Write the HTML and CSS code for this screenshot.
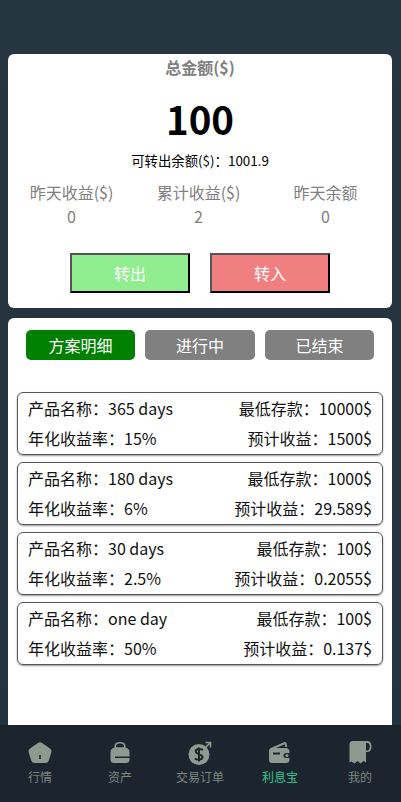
FILE: index.html
```html
<!DOCTYPE html>
<html lang="zh">
<head>
<meta charset="utf-8">
<title>利息宝</title>
<link rel="stylesheet" href="styles.css">
</head>
<body>
<div class="app">
  <main class="content">
    <section class="summary">
      <div class="total-label">总金额($)</div>
      <div class="total-value">100</div>
      <div class="available">可转出余额($)：1001.9</div>
      <div class="stats">
        <div class="stat"><div>昨天收益($)</div><div>0</div></div>
        <div class="stat"><div>累计收益($)</div><div>2</div></div>
        <div class="stat"><div>昨天余额</div><div>0</div></div>
      </div>
      <div class="actions">
        <button class="action out">转出</button>
        <button class="action in">转入</button>
      </div>
    </section>
    <section class="plans">
      <div class="tabs">
        <div class="tab active">方案明细</div>
        <div class="tab">进行中</div>
        <div class="tab">已结束</div>
      </div>
      <div class="plan"><div class="row"><span>产品名称：365 days</span><span>最低存款：10000$</span></div><div class="row"><span>年化收益率：15%</span><span>预计收益：1500$</span></div></div>
      <div class="plan"><div class="row"><span>产品名称：180 days</span><span>最低存款：1000$</span></div><div class="row"><span>年化收益率：6%</span><span>预计收益：29.589$</span></div></div>
      <div class="plan"><div class="row"><span>产品名称：30 days</span><span>最低存款：100$</span></div><div class="row"><span>年化收益率：2.5%</span><span>预计收益：0.2055$</span></div></div>
      <div class="plan"><div class="row"><span>产品名称：one day</span><span>最低存款：100$</span></div><div class="row"><span>年化收益率：50%</span><span>预计收益：0.137$</span></div></div>
    </section>
  </main>
  <nav class="nav">
    <div class="nav-item"><svg viewBox="0 0 24 24"><path fill-rule="evenodd" d="M10 2 Q12 .6 14 2 L22 7.500 Q24 9 23.400 11 L20.800 19.500 Q20 22 17.500 22 H6.500 Q4 22 3.200 19.500 L.6 11 Q0 9 2 7.500 Z M11.200 14 V18 H12.800 V14 Z"/></svg><span>行情</span></div>
    <div class="nav-item"><svg viewBox="0 0 24 24"><path fill-rule="evenodd" d="M6.500 6.500 V5 Q6.500 1 12 1 Q17.500 1 17.500 5 V6.500 Q21.500 7.500 21.500 11 V18.500 Q21.500 22 18 22 H6 Q2.500 22 2.500 18.500 V11 Q2.500 7.500 6.500 6.500 Z M8 6.300 H16 V5 Q16 2.500 12 2.500 Q8 2.500 8 5 Z M7 15.500 V17 H21.500 V15.500 Z"/></svg><span>资产</span></div>
    <div class="nav-item"><svg viewBox="0 0 24 24"><circle cx="11" cy="13.500" r="10.500"/><path class="cut" d="M15 9.200 C13.500 7.500 7.800 7.500 7.800 10.500 C7.800 13.500 14.500 13 14.500 16.300 C14.500 19 8.500 19.300 7 17.300 M11 6.500 V20.500" fill="none" stroke-width="2"/><path class="arrow" d="M15.500 8.500 L22 2 M17.500 1.500 H22.500 V6.500" fill="none" stroke-width="1.600"/></svg><span>交易订单</span></div>
    <div class="nav-item current"><svg viewBox="0 0 24 24"><path fill-rule="evenodd" d="M4 6.500 L16 1.300 Q18 .6 18.500 2.500 L19.300 6 H17.300 L16.700 3.300 L8 7 H18 Q21 7 21.500 10.500 V12 H18.500 Q15.500 12 15.500 14.500 Q15.500 17 18.500 17 H21.500 V18.500 Q21.500 22 18 22 H4 Q1 22 1 19 V10 Q1 7.500 4 6.500 Z M5 11.500 V13.500 H12 V11.500 Z"/><circle cx="19" cy="14.500" r="1.500"/></svg><span>利息宝</span></div>
    <div class="nav-item"><svg viewBox="0 0 24 24"><path fill-rule="evenodd" d="M5 0 H19 Q23.500 0 23.500 5.500 Q23.500 11 19 11 H18 V21.500 L15.500 20 L12.500 22.500 L9.500 20 L6.500 22.500 L3.500 20.500 L1.500 21.500 V3.500 Q1.500 0 5 0 Z M18 2 V9.500 H19 Q21.800 9.500 21.800 5.500 Q21.800 2 19 2 Z"/></svg><span>我的</span></div>
  </nav>
</div>
</body>
</html>
```
FILE: styles.css
```css
* { box-sizing: border-box; }
html, body { margin: 0; padding: 0; }
body {
  width: 401px;
  height: 802px;
  overflow: hidden;
  font-family: "Noto Sans CJK SC", "Noto Sans", sans-serif;
  color: #000;
}
.app {
  height: 802px;
  display: flex;
  flex-direction: column;
  background: linear-gradient(#263640, #21333f);
}
.content {
  height: 725px;
  padding: 54px 9px 0 8px;
  flex: none;
  display: flex;
  flex-direction: column;
  gap: 10px;
}
.summary {
  height: 254px;
  background: #fff;
  border-radius: 6px;
  display: flex;
  flex-direction: column;
  align-items: center;
  flex: none;
}
.total-label {
  font-size: 16px;
  font-weight: 700;
  line-height: 26px;
  color: #808080;
}
.total-value {
  margin-top: 12px;
  font-size: 38.5px;
  font-weight: 700;
  line-height: 52px;
}
.available {
  margin-top: 6px;
  font-size: 13.4px;
  line-height: 20px;
}
.stats {
  align-self: stretch;
  display: grid;
  grid-template-columns: 127px 127px 127px;
  margin-top: 10px;
  text-align: center;
  font-size: 16px;
  line-height: 24px;
  color: #808080;
}
.actions {
  display: flex;
  gap: 20px;
  margin-top: 25px;
}
.action {
  width: 120px;
  height: 40px;
  border: 2px solid;
  border-color: #555 #000 #000 #555;
  padding: 0;
  font: 400 16px "Noto Sans CJK SC", sans-serif;
  color: #fff;
}
.out { background: #90ee90; }
.in { background: #f08080; }
.plans {
  flex: 1;
  background: #fff;
  border-radius: 6px 6px 0 0;
  padding: 12px 9px 0;
}
.tabs {
  display: flex;
  justify-content: space-between;
  padding: 0 9px;
  margin-bottom: 32px;
}
.tab {
  width: 110px;
  height: 30px;
  border-radius: 5px;
  background: #808080;
  color: #fff;
  text-align: center;
  font-size: 16px;
  font-weight: 400;
  line-height: 30px;
}
.tab:first-child { width: 109px; }
.tab:last-child { width: 109px; }
.tab.active { background: #008000; }
.plan {
  height: 63px;
  margin-bottom: 7px;
  padding: 0 10px;
  border: 1px solid #555;
  border-radius: 6px;
  box-shadow: 0 1px 2px #999;
  display: flex;
  flex-direction: column;
  font-size: 16px;
  line-height: 30px;
  color: #111;
}
.row { display: flex; justify-content: space-between; height: 30px; }
.row span { white-space: nowrap; }
.nav {
  flex: 1;
  background: #1c252e;
  display: grid;
  grid-template-columns: repeat(5, 80px);
  padding-top: 16px;
}
.nav-item {
  display: flex;
  flex-direction: column;
  align-items: center;
  font-size: 12px;
  line-height: 16px;
  color: #7b8580;
}
.nav-item svg {
  width: 24px;
  height: 24px;
  fill: #8d9a90;
  margin-bottom: 4px;
}
.nav-item .cut { stroke: #1c252e; }
.nav-item .arrow { stroke: #8d9a90; }
.nav-item.current span { color: #35c58f; }
```
